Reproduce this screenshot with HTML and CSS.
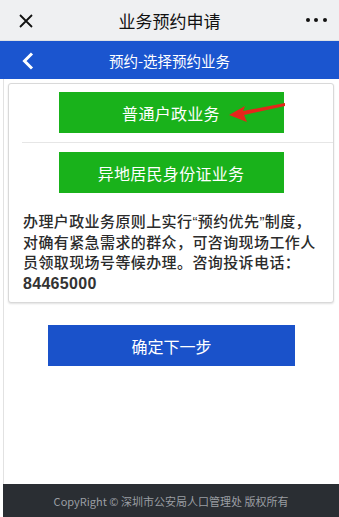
FILE: index.html
```html
<!DOCTYPE html>
<html lang="zh-CN">
<head>
    <meta charset="UTF-8">
    <meta name="viewport" content="width=device-width, initial-scale=1.0">
    <title>业务预约申请</title>
    <link rel="stylesheet" href="styles.css">
</head>
<body>
    <div class="app">
        <div class="topbar">
            <div class="top-close">
                <svg width="14" height="14" viewBox="0 0 14 14"><path d="M1 1L13 13M13 1L1 13" stroke="#111" stroke-width="1.8" fill="none"/></svg>
            </div>
            <div class="top-title">业务预约申请</div>
            <div class="top-more"><i></i><i></i><i></i></div>
        </div>

        <div class="navbar">
            <div class="nav-back">
                <svg width="12" height="18" viewBox="0 0 12 18"><path d="M10 1.5L2.5 9L10 16.5" stroke="#fff" stroke-width="3" fill="none" stroke-linejoin="miter"/></svg>
            </div>
            <div class="nav-title">预约-选择预约业务</div>
            <div></div>
        </div>

        <div class="page">
            <div class="card">
                <div class="option">
                    <button class="btn-green">普通户政业务
                        <svg class="arrow" width="70" height="30" viewBox="0 0 70 30"><polygon points="10,18 26,9 24,14 66,6 66,9 25,18 28,25" fill="#e5261b"/></svg>
                    </button>
                </div>
                <div class="option line">
                    <button class="btn-green">异地居民身份证业务</button>
                </div>
                <p class="note">办理户政业务原则上实行“预约优先”制度，对确有紧急需求的群众，可咨询现场工作人员领取现场号等候办理。咨询投诉电话：</p>
                <p class="tel">84465000</p>
            </div>

            <button class="btn-next">确定下一步</button>
        </div>

        <div class="footer">CopyRight © 深圳市公安局人口管理处 版权所有</div>
    </div>
</body>
</html>
```

FILE: styles.css
```css
html, body {
    margin: 0;
    padding: 0;
    background: #fff;
}
body {
    font-family: "Noto Sans CJK SC", "Noto Sans", sans-serif;
}
.app {
    display: flex;
    flex-direction: column;
    min-height: 517px;
}
.topbar {
    display: grid;
    grid-template-columns: 52px 1fr 52px;
    align-items: center;
    height: 40px;
    background: #eff0f2;
    border-bottom: 1px solid #dfe1e4;
}
.top-close {
    display: flex;
    justify-content: center;
    padding-top: 1px;
}
.top-title {
    text-align: center;
    font-size: 17px;
    color: #111;
}
.top-more {
    display: flex;
    gap: 4.5px;
    justify-content: center;
    padding-left: 6px;
}
.top-more i {
    width: 4px;
    height: 4px;
    border-radius: 50%;
    background: #111;
}
.navbar {
    display: grid;
    grid-template-columns: 52px 1fr 52px;
    align-items: center;
    height: 38px;
    background: #1b55cf;
}
.nav-back {
    display: flex;
    justify-content: center;
    padding-left: 3px;
    padding-top: 2px;
}
.nav-title {
    text-align: center;
    color: #fff;
    font-size: 14.5px;
}
.page {
    flex: 1;
    margin-left: 3px;
    border-left: 1px solid #e2e2e2;
    padding-top: 4px;
}
.card {
    margin: 0 5px 0 4px;
    border: 1px solid #d9d9d9;
    border-radius: 3px;
    box-shadow: 0 1px 2px rgba(0, 0, 0, 0.12);
    background: #fff;
}
.option {
    padding: 8px 0 9px 0;
    text-align: center;
}
.option.line {
    margin-left: 13px;
    border-top: 1px solid #e6e6e6;
    padding: 9px 13px 0 0;
}
button {
    border: none;
    font-family: inherit;
    color: #fff;
    cursor: pointer;
}
.btn-green {
    position: relative;
    width: 225px;
    height: 41px;
    background: #19b21b;
    font-size: 16px;
    letter-spacing: 0.3px;
}
.arrow {
    position: absolute;
    left: 160px;
    top: 5px;
}
.note {
    margin: 0;
    padding: 19px 12px 0 14px;
    font-family: "Liberation Sans", "Noto Sans CJK SC", sans-serif;
    font-size: 15px;
    font-weight: 500;
    letter-spacing: 0.4px;
    line-height: 20.5px;
    color: #2b2b2b;
}
.tel {
    margin: 0;
    padding: 0 12px 8px 14px;
    font-family: "Liberation Sans", sans-serif;
    font-size: 16px;
    font-weight: 700;
    letter-spacing: 0.3px;
    line-height: 20.5px;
    color: #333;
}
.btn-next {
    display: block;
    width: 247px;
    height: 41px;
    margin: 22px auto 0 auto;
    background: #1a52ca;
    font-size: 16px;
}
.footer {
    margin-left: 3px;
    height: 33px;
    line-height: 35px;
    background: #2a2e33;
    color: #9a9ea3;
    font-size: 11px;
    text-align: center;
}
```
